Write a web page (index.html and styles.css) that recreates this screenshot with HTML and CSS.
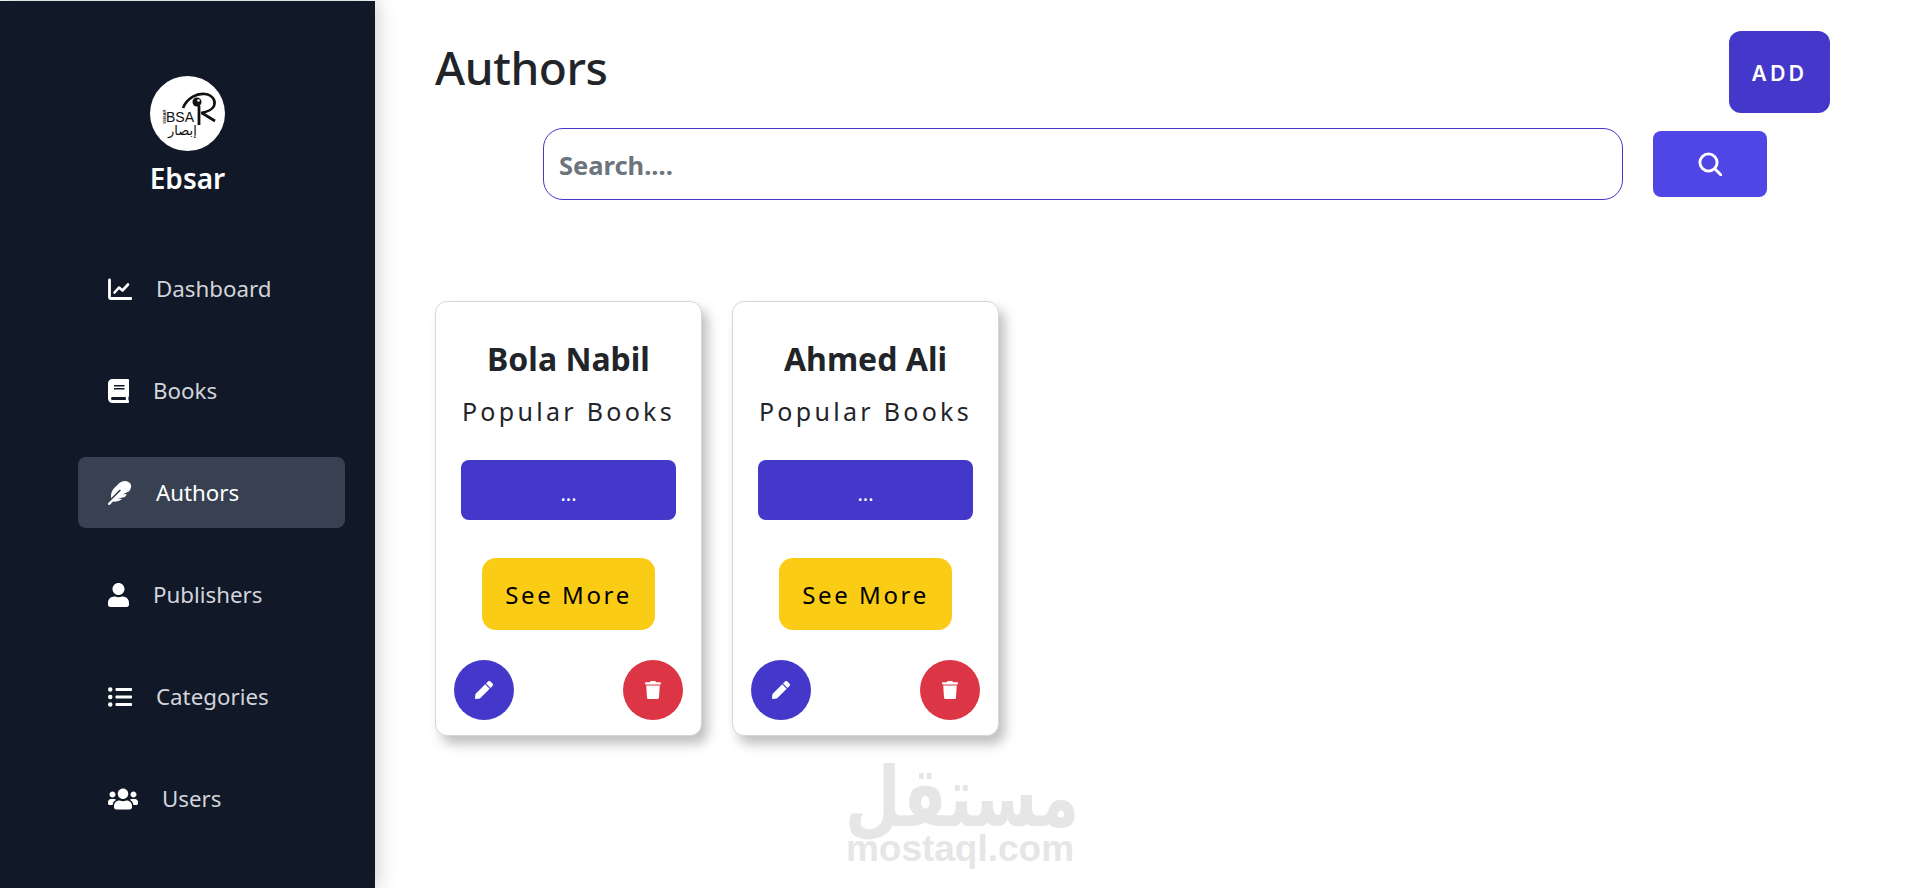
FILE: index.html
```html
<!DOCTYPE html>
<html>
<head>
    <title>Ebsar - Authors</title>
    <link rel="stylesheet" href="styles.css">
</head>
<body>
    <aside class="sidebar">
        <div class="brand">
            <div class="logo">
                <svg class="logo-mark" viewBox="0 0 75 75">
                    <path d="M33 32C37 22 47 17 55 18c8 1 11 7 9 12-2 4-7 6-13 7" fill="none" stroke="#111" stroke-width="2.6"/>
                    <path d="M49 30v19M52 37l13 8" fill="none" stroke="#111" stroke-width="2.8"/>
                    <circle cx="47" cy="26" r="4.5" fill="#111"/>
                    <circle cx="48.5" cy="24.5" r="1.3" fill="#fff"/>
                </svg>
                <span class="logo-side">EBSAR</span>
                <span class="logo-latin">BSA</span>
                <span class="logo-arabic">إبصار</span>
            </div>
            <h2>Ebsar</h2>
        </div>
        <nav class="nav">
            <a class="nav-item" href="#">
                <svg class="icon" viewBox="0 0 24 24" width="24" height="24"><path d="M1.5 3v17a1.5 1.5 0 0 0 1.5 1.5h20" fill="none" stroke="currentColor" stroke-width="2.8" stroke-linecap="round"/><path d="M6.5 15.5l4.5-5 3.5 3 5.5-6" fill="none" stroke="currentColor" stroke-width="2.6" stroke-linecap="round" stroke-linejoin="round"/></svg>
                <span>Dashboard</span>
            </a>
            <a class="nav-item" href="#">
                <svg class="icon" viewBox="0 0 448 512" width="21" height="24"><path d="M448 360V24c0-13.3-10.7-24-24-24H96C43 0 0 43 0 96v320c0 53 43 96 96 96h328c13.3 0 24-10.7 24-24v-16c0-7.5-3.5-14.3-8.9-18.7-4.2-15.4-4.2-59.3 0-74.7 5.4-4.3 8.9-11.1 8.9-18.6zM128 134c0-3.3 2.7-6 6-6h212c3.3 0 6 2.7 6 6v20c0 3.3-2.7 6-6 6H134c-3.3 0-6-2.7-6-6v-20zm0 64c0-3.3 2.7-6 6-6h212c3.3 0 6 2.7 6 6v20c0 3.3-2.7 6-6 6H134c-3.3 0-6-2.7-6-6v-20zm253.4 250H96c-17.7 0-32-14.3-32-32 0-17.6 14.4-32 32-32h285.4c-1.9 17.1-1.9 46.9 0 64z"/></svg>
                <span>Books</span>
            </a>
            <a class="nav-item active" href="#">
                <svg class="icon" viewBox="0 0 512 512" width="24" height="24"><path d="M467.14 44.84c-62.55-62.48-161.67-64.78-252.28 25.73-78.61 78.52-60.98 60.92-85.75 85.66-60.46 60.39-70.39 150.83-63.64 211.17l178.44-178.25c6.26-6.25 16.4-6.25 22.65 0s6.25 16.38 0 22.63L7.04 471.03c-9.38 9.37-9.38 24.57 0 33.94 9.38 9.37 24.59 9.37 33.98 0l66.1-66.03C170 446 240 430 300 385L215 372L360 340C378 322 392 305 404 285H320L445 225C500 150 510 90 467.14 44.84Z"/></svg>
                <span>Authors</span>
            </a>
            <a class="nav-item" href="#">
                <svg class="icon" viewBox="0 0 448 512" width="21" height="24"><path d="M224 256c70.7 0 128-57.3 128-128S294.7 0 224 0 96 57.3 96 128s57.3 128 128 128zm89.6 32h-16.7c-22.2 10.2-46.9 16-72.9 16s-50.6-5.8-72.9-16h-16.7C60.2 288 0 348.2 0 422.4V464c0 26.5 21.5 48 48 48h352c26.5 0 48-21.5 48-48v-41.6c0-74.2-60.2-134.4-134.4-134.4z"/></svg>
                <span>Publishers</span>
            </a>
            <a class="nav-item" href="#">
                <svg class="icon" viewBox="0 0 512 512" width="24" height="24"><path d="M48 48a48 48 0 1 0 48 48 48 48 0 0 0-48-48zm0 160a48 48 0 1 0 48 48 48 48 0 0 0-48-48zm0 160a48 48 0 1 0 48 48 48 48 0 0 0-48-48zm448 16H176a16 16 0 0 0-16 16v32a16 16 0 0 0 16 16h320a16 16 0 0 0 16-16v-32a16 16 0 0 0-16-16zm0-320H176a16 16 0 0 0-16 16v32a16 16 0 0 0 16 16h320a16 16 0 0 0 16-16V80a16 16 0 0 0-16-16zm0 160H176a16 16 0 0 0-16 16v32a16 16 0 0 0 16 16h320a16 16 0 0 0 16-16v-32a16 16 0 0 0-16-16z"/></svg>
                <span>Categories</span>
            </a>
            <a class="nav-item" href="#">
                <svg class="icon" viewBox="0 0 640 512" width="30" height="24"><path d="M96 224c35.3 0 64-28.7 64-64s-28.7-64-64-64-64 28.7-64 64 28.7 64 64 64zm448 0c35.3 0 64-28.7 64-64s-28.7-64-64-64-64 28.7-64 64 28.7 64 64 64zm32 32h-64c-17.6 0-33.5 7.1-45.1 18.6 40.3 22.1 68.9 62 75.1 109.4h66c17.7 0 32-14.3 32-32v-32c0-35.3-28.7-64-64-64zm-256 0c61.9 0 112-50.1 112-112S381.9 32 320 32 208 82.1 208 144s50.1 112 112 112zm76.8 32h-8.3c-20.8 10-43.9 16-68.5 16s-47.6-6-68.5-16h-8.3C179.6 288 128 339.6 128 403.2V432c0 26.5 21.5 48 48 48h288c26.5 0 48-21.5 48-48v-28.8c0-63.6-51.6-115.2-115.2-115.2zm-223.7-13.4C161.5 263.1 145.6 256 128 256H64c-35.3 0-64 28.7-64 64v32c0 17.7 14.3 32 32 32h65.9c6.3-47.4 34.9-87.3 75.2-109.4z"/></svg>
                <span>Users</span>
            </a>
        </nav>
    </aside>

    <main class="content">
        <div class="page-head">
            <h1>Authors</h1>
            <button class="add-btn">ADD</button>
        </div>

        <form class="search">
            <input type="text" placeholder="Search....">
            <button class="search-btn" type="button">
                <svg viewBox="0 0 24 24" width="24" height="24"><circle cx="10.5" cy="10.5" r="8.6" fill="none" stroke="#fff" stroke-width="2.9"/><path d="M17 17l6 6" stroke="#fff" stroke-width="2.9" stroke-linecap="round"/></svg>
            </button>
        </form>

        <div class="cards">
            <div class="card">
                <h3>Bola Nabil</h3>
                <h4>Popular Books</h4>
                <div class="books-bar">...</div>
                <a class="see-more" href="#">See More</a>
                <div class="card-actions">
                    <button class="round-btn edit">
                        <svg viewBox="0 0 512 512" width="18" height="18"><path d="M290.74 93.24l128.02 128.02-277.99 277.99-114.14 12.6C11.35 513.54-1.56 500.62.14 485.34l12.7-114.22 277.9-277.88zm207.2-19.06l-60.11-60.11c-18.75-18.75-49.16-18.75-67.91 0l-56.55 56.55 128.02 128.02 56.55-56.55c18.75-18.76 18.75-49.16 0-67.91z"/></svg>
                    </button>
                    <button class="round-btn delete">
                        <svg viewBox="0 0 448 512" width="16" height="18"><path d="M432 32H312l-9.4-18.7A24 24 0 0 0 281.1 0H166.8a23.72 23.72 0 0 0-21.4 13.3L136 32H16A16 16 0 0 0 0 48v32a16 16 0 0 0 16 16h416a16 16 0 0 0 16-16V48a16 16 0 0 0-16-16zM53.2 467a48 48 0 0 0 47.9 45h245.8a48 48 0 0 0 47.9-45L416 128H32z"/></svg>
                    </button>
                </div>
            </div>

            <div class="card">
                <h3>Ahmed Ali</h3>
                <h4>Popular Books</h4>
                <div class="books-bar">...</div>
                <a class="see-more" href="#">See More</a>
                <div class="card-actions">
                    <button class="round-btn edit">
                        <svg viewBox="0 0 512 512" width="18" height="18"><path d="M290.74 93.24l128.02 128.02-277.99 277.99-114.14 12.6C11.35 513.54-1.56 500.62.14 485.34l12.7-114.22 277.9-277.88zm207.2-19.06l-60.11-60.11c-18.75-18.75-49.16-18.75-67.91 0l-56.55 56.55 128.02 128.02 56.55-56.55c18.75-18.76 18.75-49.16 0-67.91z"/></svg>
                    </button>
                    <button class="round-btn delete">
                        <svg viewBox="0 0 448 512" width="16" height="18"><path d="M432 32H312l-9.4-18.7A24 24 0 0 0 281.1 0H166.8a23.72 23.72 0 0 0-21.4 13.3L136 32H16A16 16 0 0 0 0 48v32a16 16 0 0 0 16 16h416a16 16 0 0 0 16-16V48a16 16 0 0 0-16-16zM53.2 467a48 48 0 0 0 47.9 45h245.8a48 48 0 0 0 47.9-45L416 128H32z"/></svg>
                    </button>
                </div>
            </div>
        </div>
    </main>

    <div class="watermark">
        <div class="watermark-ar">مستقل</div>
        <div class="watermark-en">mostaql.com</div>
    </div>
</body>
</html>
```

FILE: styles.css
```css
* { box-sizing: border-box; }
html, body { height: 100%; }
body {
    margin: 0;
    padding-top: 1px;
    display: flex;
    height: 888px;
    overflow: hidden;
    background: white;
    color: #212529;
    font-family: "Noto Sans", sans-serif;
}
a { text-decoration: none; }
button { border: none; cursor: pointer; }

/* sidebar */
.sidebar {
    width: 375px;
    flex-shrink: 0;
    background: #111827;
    box-shadow: 0 0 20px rgba(0,0,0,0.25);
    padding: 75px 30px 0 78px;
}
.brand {
    width: 219px;
    display: flex;
    flex-direction: column;
    align-items: center;
}
.brand h2 {
    margin: 9px 0 0 0;
    color: white;
    font-size: 28px;
    line-height: 36px;
    font-weight: 600;
}
.logo {
    position: relative;
    width: 75px;
    height: 75px;
    border-radius: 50%;
    background: white;
    overflow: hidden;
}
.logo-mark { position: absolute; left: 0; top: 0; width: 75px; height: 75px; }
.logo-latin {
    position: absolute;
    left: 16px;
    top: 33px;
    font: 14px/16px "Liberation Sans", sans-serif;
    color: #111;
}
.logo-side {
    position: absolute;
    left: 7px;
    top: 36px;
    font: bold 4px/9px "Liberation Sans", sans-serif;
    color: #111;
    transform: rotate(-90deg);
}
.logo-arabic {
    position: absolute;
    left: 18px;
    top: 47px;
    font: 13px/16px "DejaVu Sans", sans-serif;
    color: #111;
}

.nav {
    margin-top: 57px;
    display: flex;
    flex-direction: column;
    gap: 31px;
}
.nav-item {
    display: flex;
    align-items: center;
    gap: 24px;
    width: 267px;
    height: 71px;
    padding-left: 30px;
    border-radius: 8px;
    color: #d1d5db;
    font-size: 22.3px;
}
.nav-item .icon { fill: white; color: white; flex-shrink: 0; }
.nav-item.active { background: #374151; color: white; }

/* main area */
.content {
    flex: 1;
    padding: 30px 90px 0 60px;
}
.page-head {
    display: flex;
    justify-content: space-between;
    align-items: flex-start;
}
h1 {
    margin: 0;
    font-size: 46px;
    line-height: 72px;
    font-weight: 500;
    letter-spacing: -0.4px;
}
.add-btn {
    width: 101px;
    height: 82px;
    padding-top: 4px;
    background: #4338ca;
    color: white;
    border-radius: 12px;
    font: 600 21px "Inter", sans-serif;
    letter-spacing: 3.4px;
}
.search {
    display: flex;
    align-items: center;
    gap: 30px;
    margin: 15px 63px 0 108px;
}
.search input {
    flex: 1;
    height: 72px;
    padding: 2px 15px 0;
    border: 1px solid #4338ca;
    border-radius: 20px;
    outline: none;
    font-family: "Noto Sans", sans-serif;
    font-size: 25.5px;
    font-weight: 700;
}
.search input::placeholder { color: #6c757d; opacity: 1; }
.search-btn {
    width: 114px;
    height: 66px;
    background: #4f46e5;
    border-radius: 8px;
    display: flex;
    align-items: center;
    justify-content: center;
}

/* author cards */
.cards {
    display: flex;
    gap: 30px;
    margin-top: 101px;
}
.card {
    width: 267px;
    height: 435px;
    padding: 33px 18px 0;
    border: 1px solid #d6d6d6;
    border-radius: 12px;
    background: white;
    box-shadow: 6px 8px 12px rgba(0,0,0,0.25);
    display: flex;
    flex-direction: column;
    align-items: center;
}
.card h3 {
    margin: 0;
    font-size: 32px;
    line-height: 48px;
    font-weight: 700;
}
.card h4 {
    margin: 10px 0 0 0;
    font-size: 25px;
    line-height: 36px;
    font-weight: 400;
    letter-spacing: 3.3px;
    white-space: nowrap;
}
.books-bar {
    width: 215px;
    height: 60px;
    margin-top: 31px;
    border-radius: 8px;
    background: #4338ca;
    color: white;
    text-align: center;
    font-size: 20px;
    line-height: 67px;
}
.see-more {
    width: 173px;
    height: 72px;
    margin-top: 38px;
    border-radius: 14px;
    background: #facc15;
    color: black;
    text-align: center;
    font-size: 24px;
    line-height: 73px;
    letter-spacing: 2.6px;
}
.card-actions {
    width: 100%;
    margin-top: 30px;
    display: flex;
    justify-content: space-between;
}
.round-btn {
    width: 60px;
    height: 60px;
    padding: 0;
    border-radius: 50%;
    display: flex;
    align-items: center;
    justify-content: center;
    fill: white;
}
.round-btn.edit { background: #4338ca; }
.round-btn.delete { background: #dc3545; }

/* stays over the page */
.watermark {
    position: absolute;
    left: 845px;
    top: 774px;
    width: 230px;
    color: #e6e6e6;
    text-align: center;
    pointer-events: none;
}
.watermark-ar {
    height: 46px;
    font: bold 64px/46px "DejaVu Sans", sans-serif;
    white-space: nowrap;
    transform: scaleY(1.3);
}
.watermark-en {
    margin-top: 9px;
    font: bold 37px/40px "Liberation Sans", sans-serif;
    white-space: nowrap;
}
```
